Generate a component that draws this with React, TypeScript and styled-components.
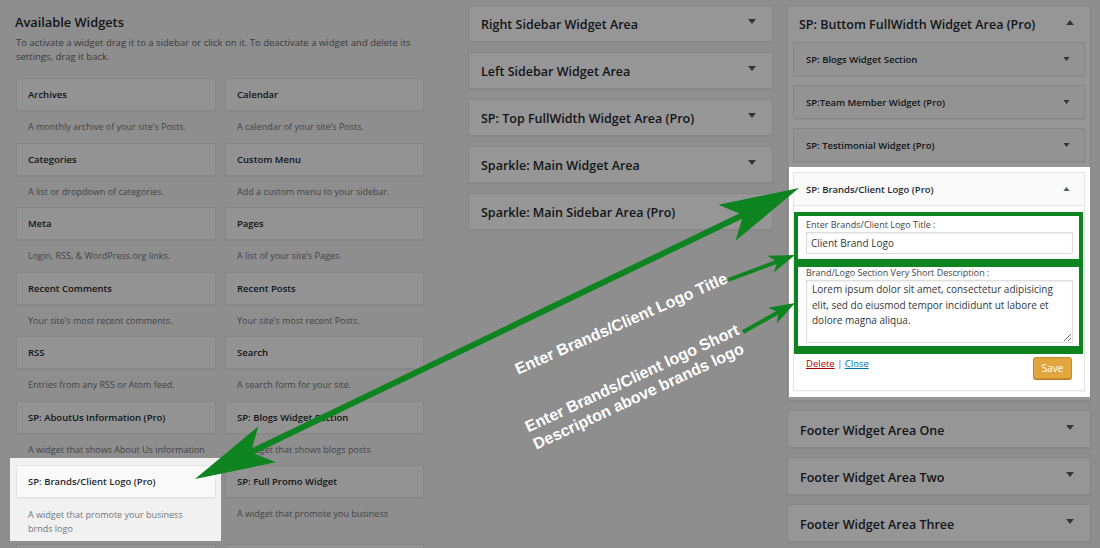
import React from "react";
import styled, { createGlobalStyle } from "styled-components";

const GlobalStyle = createGlobalStyle`
  html, body { margin: 0; padding: 0; background: #f1f1f1; }
  body { font-family: "Open Sans", "Noto Sans", sans-serif; color: #23282d; }
  * { box-sizing: border-box; }
`;

const GREEN = "#0d8420";

const Page = styled.div`
  position: relative;
  width: 1100px;
  height: 548px;
  overflow: hidden;
  display: flex;
  align-items: flex-start;
  background: #f1f1f1;
`;

const Dim = styled.div`
  position: absolute;
  inset: 0;
  background: rgba(0, 0, 0, 0.41);
  z-index: 1;
  pointer-events: none;
`;

/* ---------- left column ---------- */
const LeftCol = styled.section`
  flex: none;
  width: 468px;
  padding: 12px 0 0 16px;
`;

const Heading = styled.h2`
  margin: 0 0 0 -1px;
  font-size: 12.8px;
  font-weight: 600;
  line-height: 20px;
  color: #23282d;
`;

const Intro = styled.p`
  margin: 4px 0 14px;
  font-size: 9.5px;
  line-height: 14px;
  color: #666;
`;

const WidgetGrid = styled.div`
  display: grid;
  grid-template-columns: 200px 199px;
  column-gap: 9px;
  align-items: start;
`;

const WidgetItem = styled.div``;

const LitItem = styled.div`
  position: relative;
  z-index: 2;
  background: #f1f1f1;
  margin: -7px -5px 3px -6px;
  padding: 7px 5px 0 6px;
`;

const WidgetBar = styled.div`
  height: 33px;
  display: flex;
  align-items: center;
  padding: 0 11px;
  background: #fafafa;
  border: 1px solid #e5e5e5;
  box-shadow: 0 1px 1px rgba(0, 0, 0, 0.04);
  font-size: 9.5px;
  font-weight: 600;
  color: #23282d;
  white-space: nowrap;
`;

const WidgetDesc = styled.p<{ $lit?: boolean }>`
  margin: 0;
  padding: ${(p) => (p.$lit ? "9.5px 12px 5px" : "9px 12px 8.5px")};
  font-size: 9px;
  line-height: 14px;
  color: #72777c;
  white-space: nowrap;
`;

/* ---------- middle column ---------- */
const MidCol = styled.section`
  flex: none;
  width: 305px;
  padding-top: 5px;
  display: flex;
  flex-direction: column;
  gap: 10px;
`;

const AreaBox = styled.div<{ $h?: number }>`
  height: ${(p) => p.$h ?? 37}px;
  display: flex;
  align-items: center;
  justify-content: space-between;
  padding: ${(p) => (p.$h ? "2px" : "1px")} 16px 0 12px;
  background: #fff;
  border: 1px solid #e5e5e5;
  box-shadow: 0 1px 1px rgba(0, 0, 0, 0.04);
  font-size: 12.5px;
  font-weight: 600;
  color: #23282d;
  white-space: nowrap;
`;

const Caret = styled.svg`
  flex: none;
  width: 8px;
  height: 5px;
  margin-bottom: 5px;
  fill: #555d66;
`;

const SmallCaret = styled(Caret)`
  width: 7px;
  height: 4px;
  margin-bottom: 0;
`;

/* ---------- right column ---------- */
const RightCol = styled.section`
  flex: none;
  width: 304px;
  margin-left: 14px;
  padding-top: 5px;
  display: flex;
  flex-direction: column;
  gap: 9px;
`;

const SidebarPanel = styled.div`
  background: #fff;
  border: 1px solid #e5e5e5;
  box-shadow: 0 1px 1px rgba(0, 0, 0, 0.04);
  padding: 0 5px 9px;
`;

const PanelHeader = styled.div`
  height: 36px;
  display: flex;
  align-items: center;
  justify-content: space-between;
  padding: 1px 11px 0 6px;
  font-size: 12.5px;
  font-weight: 600;
  white-space: nowrap;
`;

const PanelList = styled.div`
  display: flex;
  flex-direction: column;
  gap: 9px;
`;

const InnerWidget = styled.div`
  background: #fafafa;
  border: 1px solid #e5e5e5;
  box-shadow: 0 1px 1px rgba(0, 0, 0, 0.04);
`;

const InnerHead = styled.div`
  height: 32px;
  display: flex;
  align-items: center;
  justify-content: space-between;
  padding: 0 14px 0 12px;
  font-size: 9.5px;
  font-weight: 600;
  color: #23282d;
  white-space: nowrap;
`;

const LitPanel = styled.div`
  position: relative;
  z-index: 2;
  background: #fff;
  margin: -4px -5px -6px -4px;
  padding: 5px 5px 6px 4px;
`;

const WidgetInside = styled.div`
  background: #fff;
  border-top: 1px solid #e5e5e5;
  padding: 6px 1px 11px 0;
`;

const Callout = styled.div<{ $first?: boolean }>`
  border: solid ${GREEN};
  border-width: ${(p) => (p.$first ? "4px 4px 0 4px" : "8px 4px 8px 4px")};
  padding: ${(p) => (p.$first ? "3px 6px 5px 8px" : "0 6px 3px 8px")};
  display: flex;
  flex-direction: column;
  gap: 1px;
`;

const FieldLabel = styled.label`
  font-size: 9px;
  line-height: 12px;
  color: #444;
  white-space: nowrap;
`;

const TextInput = styled.input`
  height: 22px;
  width: 100%;
  margin: 0;
  padding: 0 4px;
  border: 1px solid #ddd;
  box-shadow: inset 0 1px 2px rgba(0, 0, 0, 0.07);
  font-family: inherit;
  font-size: 10px;
  color: #32373c;
  background: #fff;
  outline: none;
`;

const TextArea = styled.textarea`
  height: 63px;
  width: 100%;
  margin: 0;
  padding: 1px 5px;
  border: 1px solid #ddd;
  box-shadow: inset 0 1px 2px rgba(0, 0, 0, 0.07);
  font-family: inherit;
  font-size: 10px;
  line-height: 15.5px;
  color: #32373c;
  background: #fff;
  outline: none;
  display: block;
`;

const Actions = styled.div`
  margin-top: 3px;
  display: flex;
  justify-content: space-between;
  align-items: flex-start;
  padding: 0 11px 0 12px;
`;

const LinkRow = styled.div`
  font-size: 9.5px;
  line-height: 14px;
  color: #555;
`;

const ActionLink = styled.a<{ $danger?: boolean }>`
  color: ${(p) => (p.$danger ? "#a00" : "#0073aa")};
  text-decoration: underline;
`;

const SaveButton = styled.button`
  height: 22px;
  width: 39px;
  padding: 0;
  border: 1px solid #c68b2c;
  border-radius: 3px;
  background: #e3a63f;
  box-shadow: 0 1px 0 #b8801f;
  color: #fff;
  font-family: inherit;
  font-size: 10px;
`;

/* ---------- annotations ---------- */
const Annotations = styled.svg`
  position: absolute;
  inset: 0;
  z-index: 3;
  pointer-events: none;
`;

const Note = styled.div<{ $x: number; $y: number; $deg: number }>`
  position: absolute;
  left: ${(p) => p.$x}px;
  top: ${(p) => p.$y}px;
  z-index: 3;
  transform-origin: 0 0;
  transform: rotate(${(p) => p.$deg}deg);
  font-family: "Liberation Sans", Arial, sans-serif;
  font-weight: 700;
  font-size: 16px;
  line-height: 19px;
  color: #fff;
  white-space: nowrap;
`;

const Down = () => (
  <Caret viewBox="0 0 8 5">
    <polygon points="0,0 8,0 4,5" />
  </Caret>
);
const SmallDown = () => (
  <SmallCaret viewBox="0 0 8 5">
    <polygon points="0,0 8,0 4,5" />
  </SmallCaret>
);
const SmallUp = () => (
  <SmallCaret viewBox="0 0 8 5">
    <polygon points="0,5 8,5 4,0" />
  </SmallCaret>
);
const Up = () => (
  <Caret viewBox="0 0 8 5">
    <polygon points="0,5 8,5 4,0" />
  </Caret>
);

type W = { title: string; desc?: React.ReactNode; lit?: boolean };

const widgets: W[] = [
  { title: "Archives", desc: "A monthly archive of your site’s Posts." },
  { title: "Calendar", desc: "A calendar of your site’s Posts." },
  { title: "Categories", desc: "A list or dropdown of categories." },
  { title: "Custom Menu", desc: "Add a custom menu to your sidebar." },
  { title: "Meta", desc: "Login, RSS, & WordPress.org links." },
  { title: "Pages", desc: "A list of your site’s Pages." },
  { title: "Recent Comments", desc: "Your site’s most recent comments." },
  { title: "Recent Posts", desc: "Your site’s most recent Posts." },
  { title: "RSS", desc: "Entries from any RSS or Atom feed." },
  { title: "Search", desc: "A search form for your site." },
  { title: "SP: AboutUs Information (Pro)", desc: "A widget that shows About Us information" },
  { title: "SP: Blogs Widget Section", desc: "A widget that shows blogs posts" },
  {
    title: "SP: Brands/Client Logo (Pro)",
    desc: (
      <>
        A widget that promote your business
        <br />
        brnds logo
      </>
    ),
    lit: true,
  },
  { title: "SP: Full Promo Widget", desc: "A widget that promote you business" },
  { title: "" },
  { title: "" },
];

const middleAreas = [
  "Right Sidebar Widget Area",
  "Left Sidebar Widget Area",
  "SP: Top FullWidth Widget Area (Pro)",
  "Sparkle: Main Widget Area",
  "Sparkle: Main Sidebar Area (Pro)",
];

const footerAreas = ["Footer Widget Area One", "Footer Widget Area Two", "Footer Widget Area Three"];

const innerWidgets = ["SP: Blogs Widget Section", "SP:Team Member Widget (Pro)", "SP: Testimonial Widget (Pro)"];

export default function App() {
  return (
    <>
      <GlobalStyle />
      <Page>
        <LeftCol>
          <Heading>Available Widgets</Heading>
          <Intro>
            To activate a widget drag it to a sidebar or click on it. To deactivate a widget and delete its
            <br />
            settings, drag it back.
          </Intro>
          <WidgetGrid>
            {widgets.map((w, i) =>
              w.lit ? (
                <LitItem key={i}>
                  <WidgetBar>{w.title}</WidgetBar>
                  <WidgetDesc $lit>{w.desc}</WidgetDesc>
                </LitItem>
              ) : (
                <WidgetItem key={i}>
                  <WidgetBar>{w.title}</WidgetBar>
                  {w.desc && <WidgetDesc>{w.desc}</WidgetDesc>}
                </WidgetItem>
              )
            )}
          </WidgetGrid>
        </LeftCol>

        <MidCol>
          {middleAreas.map((a) => (
            <AreaBox key={a}>
              <span>{a}</span>
              <Down />
            </AreaBox>
          ))}
        </MidCol>

        <RightCol>
          <SidebarPanel>
            <PanelHeader>
              <span>SP: Buttom FullWidth Widget Area (Pro)</span>
              <Up />
            </PanelHeader>
            <PanelList>
              {innerWidgets.map((t) => (
                <InnerWidget key={t}>
                  <InnerHead>
                    <span>{t}</span>
                    <SmallDown />
                  </InnerHead>
                </InnerWidget>
              ))}
              <LitPanel>
                <InnerWidget>
                  <InnerHead>
                    <span>SP: Brands/Client Logo (Pro)</span>
                    <SmallUp />
                  </InnerHead>
                  <WidgetInside>
                    <Callout $first>
                      <FieldLabel>Enter Brands/Client Logo Title :</FieldLabel>
                      <TextInput readOnly value="Client Brand Logo" />
                    </Callout>
                    <Callout>
                      <FieldLabel>Brand/Logo Section Very Short Description :</FieldLabel>
                      <TextArea
                        readOnly
                        value="Lorem ipsum dolor sit amet, consectetur adipisicing elit, sed do eiusmod tempor incididunt ut labore et dolore magna aliqua."
                      />
                    </Callout>
                    <Actions>
                      <LinkRow>
                        <ActionLink $danger>Delete</ActionLink> | <ActionLink>Close</ActionLink>
                      </LinkRow>
                      <SaveButton>Save</SaveButton>
                    </Actions>
                  </WidgetInside>
                </InnerWidget>
              </LitPanel>
            </PanelList>
          </SidebarPanel>
          {footerAreas.map((a) => (
            <AreaBox key={a} $h={38}>
              <span>{a}</span>
              <Down />
            </AreaBox>
          ))}
        </RightCol>

        <Dim />

        <Annotations viewBox="0 0 1100 548" width="1100" height="548">
          {/* double-headed arrow */}
          <line x1="753.95" y1="209.7" x2="240.05" y2="457.3" stroke={GREEN} strokeWidth="6" />
          <polygon points="195,479 275.75,462.29 250.86,452.09 258.39,426.25" fill={GREEN} />
          <polygon points="799,188 718.25,204.71 743.14,214.91 735.61,240.75" fill={GREEN} />
          {/* title arrow */}
          <line x1="728" y1="280" x2="780.95" y2="260.24" stroke={GREEN} strokeWidth="4" />
          <polygon points="795,255 773.79,272.52 777.2,261.64 767.49,255.66" fill={GREEN} />
          {/* description arrow */}
          <line x1="743" y1="332" x2="781.9" y2="310.31" stroke={GREEN} strokeWidth="4" />
          <polygon points="795,303 776.67,323.52 778.41,312.25 767.91,307.8" fill={GREEN} />
        </Annotations>
        <Note $x={512} $y={361} $deg={-23.7}>
          Enter Brands/Client Logo Title
        </Note>
        <Note $x={522} $y={419} $deg={-25}>
          Enter Brands/Client logo Short
          <br />
          Descripton above brands logo
        </Note>
      </Page>
    </>
  );
}
